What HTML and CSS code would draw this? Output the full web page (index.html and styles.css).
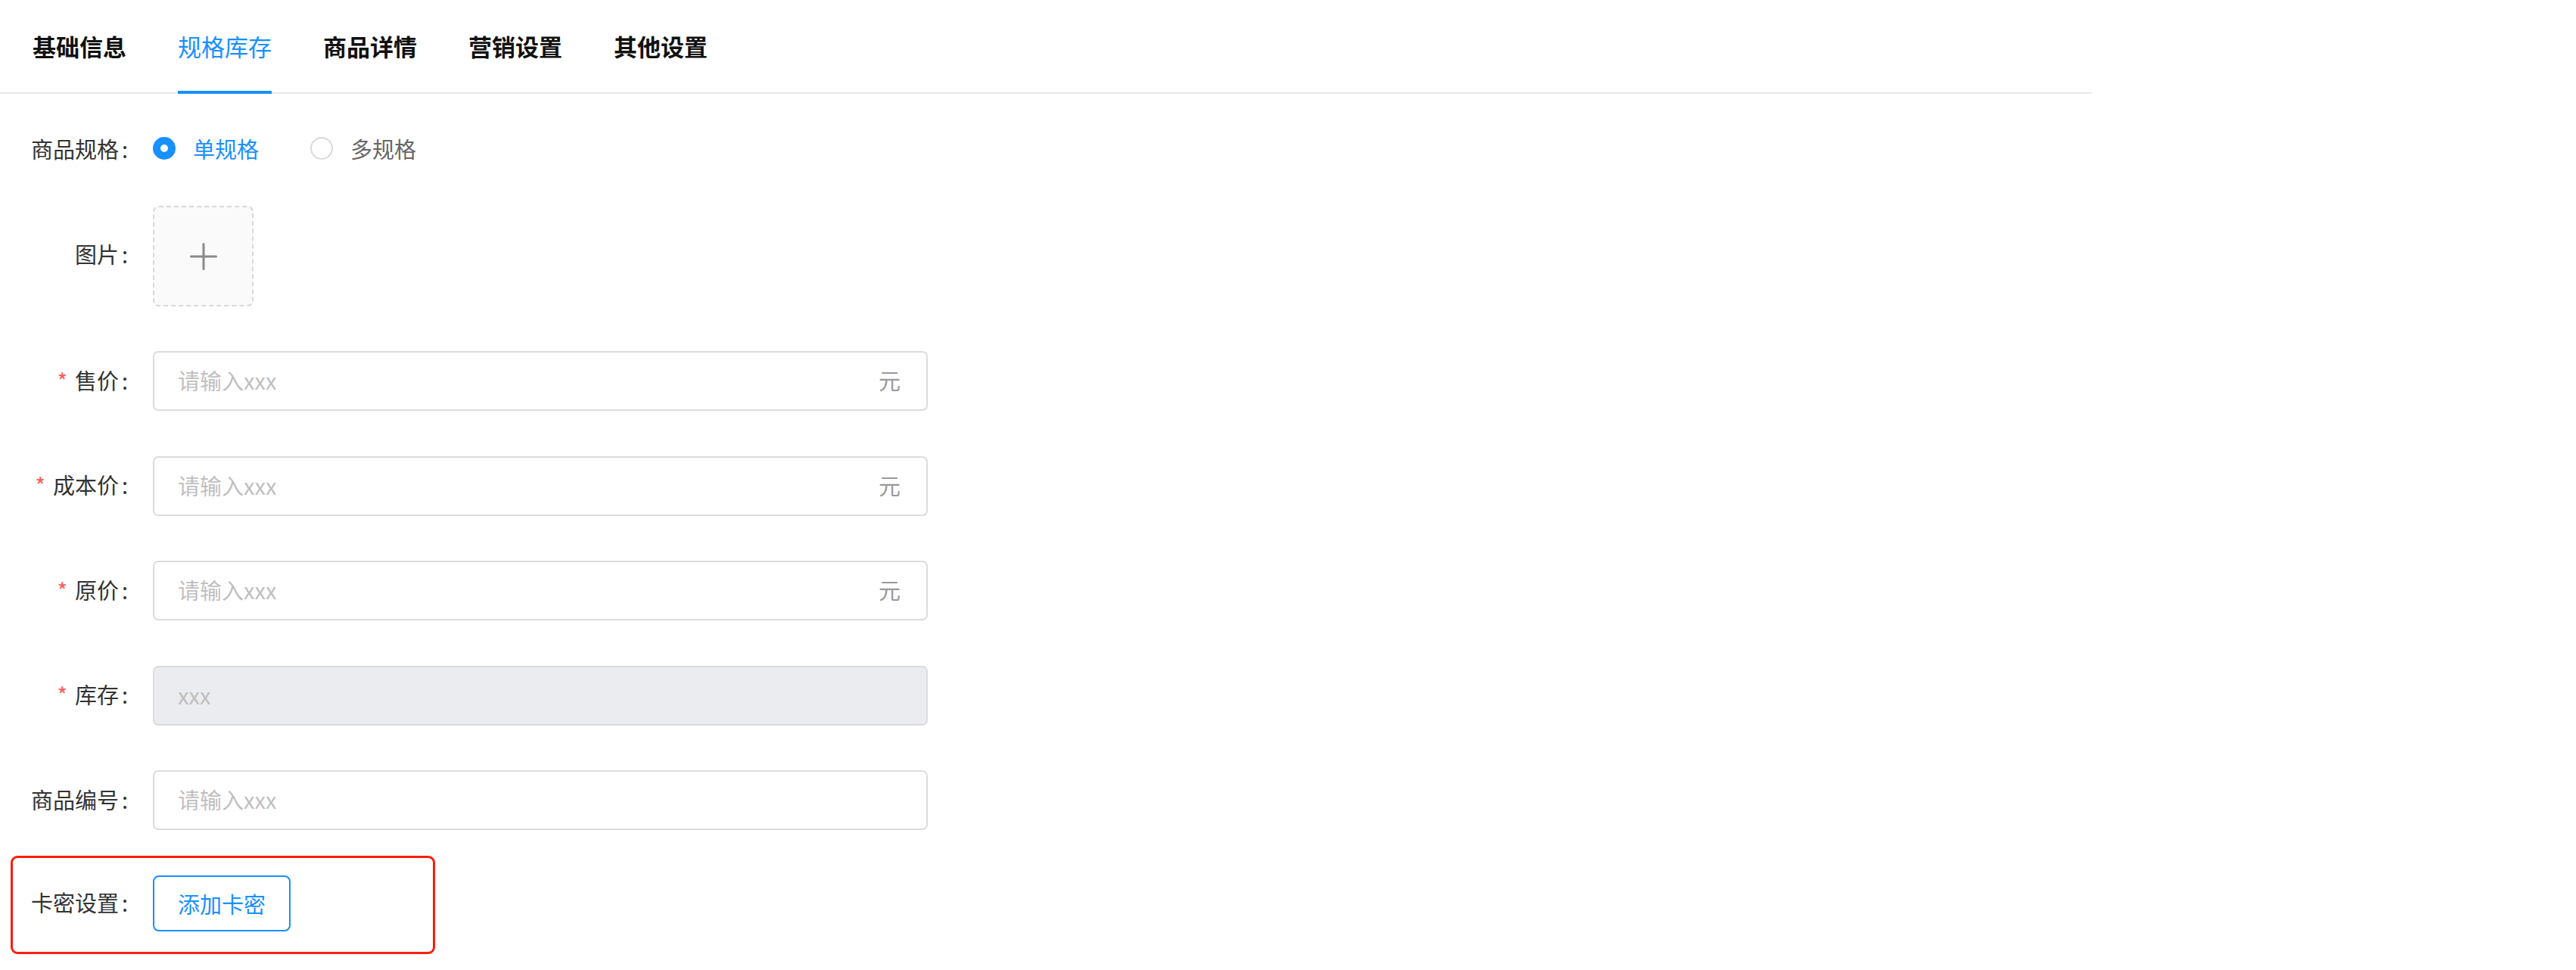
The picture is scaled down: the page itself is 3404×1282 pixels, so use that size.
FILE: index.html
```html
<!DOCTYPE html>
<html lang="zh-CN">
<head>
<meta charset="utf-8">
<title>规格库存</title>
<link rel="stylesheet" href="styles.css">
</head>
<body>
<div class="page">
  <nav class="tabs">
    <div class="tab">基础信息</div>
    <div class="tab active">规格库存</div>
    <div class="tab">商品详情</div>
    <div class="tab">营销设置</div>
    <div class="tab">其他设置</div>
  </nav>
  <form class="form">
    <div class="row row-radio">
      <label class="label">商品规格<span class="colon">:</span></label>
      <div class="radios">
        <span class="radio checked"><span class="dot"></span>单规格</span>
        <span class="radio"><span class="dot"></span>多规格</span>
      </div>
    </div>
    <div class="row row-upload">
      <label class="label label-upload">图片<span class="colon">:</span></label>
      <div class="upload">
        <svg width="36" height="36" viewBox="0 0 36 36"><path d="M18 1.5V34.5M1.5 18H34.5" stroke="#8a8a8a" stroke-width="3" stroke-linecap="round" fill="none"/></svg>
      </div>
    </div>
    <div class="row">
      <label class="label"><span class="req">*</span>售价<span class="colon">:</span></label>
      <div class="input"><span class="placeholder">请输入xxx</span><span class="suffix">元</span></div>
    </div>
    <div class="row">
      <label class="label"><span class="req">*</span>成本价<span class="colon">:</span></label>
      <div class="input"><span class="placeholder">请输入xxx</span><span class="suffix">元</span></div>
    </div>
    <div class="row">
      <label class="label"><span class="req">*</span>原价<span class="colon">:</span></label>
      <div class="input"><span class="placeholder">请输入xxx</span><span class="suffix">元</span></div>
    </div>
    <div class="row">
      <label class="label"><span class="req">*</span>库存<span class="colon">:</span></label>
      <div class="input disabled"><span class="placeholder">xxx</span></div>
    </div>
    <div class="row row-last">
      <label class="label">商品编号<span class="colon">:</span></label>
      <div class="input"><span class="placeholder">请输入xxx</span></div>
    </div>
    <div class="row row-card">
      <label class="label label-card">卡密设置<span class="colon">:</span></label>
      <button type="button" class="btn">添加卡密</button>
    </div>
  </form>
</div>
</body>
</html>
```
FILE: styles.css
```css
body {
  margin: 0;
  background: #ffffff;
  font-family: "Noto Sans CJK SC", "Noto Sans", sans-serif;
}

.page {
  width: 2764px;
}

.tabs {
  display: flex;
  gap: 68px;
  padding-left: 43px;
  height: 122px;
  border-bottom: 2px solid #e8e8e8;
}

.tab {
  box-sizing: border-box;
  height: 124px;
  padding-top: 45px;
  font-size: 31px;
  line-height: 32px;
  font-weight: 700;
  color: #111111;
  border-bottom: 4px solid transparent;
}

.tab.active {
  color: #1890ff;
  font-weight: 400;
  border-bottom-color: #1890ff;
}

.form {
  display: flex;
  flex-direction: column;
  padding-top: 34px;
}

.row {
  display: flex;
  align-items: center;
  margin-bottom: 59.5px;
}

.label {
  flex-shrink: 0;
  box-sizing: border-box;
  width: 202px;
  padding-right: 33px;
  padding-bottom: 4px;
  text-align: right;
  font-size: 29px;
  line-height: 40px;
  color: #333333;
}

.label-upload {
  padding-bottom: 8px;
}

.colon {
  margin-left: 4px;
}

.req {
  color: #ff5a5c;
  margin-right: 10px;
}

.row-radio {
  height: 79px;
  margin-bottom: 35px;
}

.row-upload {
  margin-bottom: 59px;
}

.radios {
  display: flex;
  gap: 68px;
  padding-bottom: 3px;
}

.radio {
  display: flex;
  align-items: center;
  gap: 23px;
  font-size: 29px;
  line-height: 40px;
  color: #666666;
}

.dot {
  box-sizing: border-box;
  width: 30px;
  height: 30px;
  border-radius: 50%;
  border: 2px solid #d9d9d9;
  background: #ffffff;
}

.radio.checked {
  color: #1890ff;
}

.radio.checked .dot {
  border: 10px solid #1890ff;
}

.upload {
  box-sizing: border-box;
  width: 133px;
  height: 133px;
  border: 2px dashed #d9d9d9;
  border-radius: 8px;
  background: #fafafa;
  display: flex;
  align-items: center;
  justify-content: center;
}

.input {
  box-sizing: border-box;
  width: 1024px;
  height: 79px;
  border: 2px solid #dcdcdc;
  border-radius: 7px;
  background: #ffffff;
  display: flex;
  align-items: center;
  justify-content: space-between;
  padding: 0 34px 3px 31px;
  font-size: 29px;
  line-height: 40px;
}

.input.disabled {
  background: #ebecef;
}

.placeholder {
  color: #bfbfbf;
}

.suffix {
  color: #999999;
}

.row-last {
  margin-bottom: 34px;
}

.row-card {
  box-sizing: border-box;
  margin: 0 0 0 14px;
  width: 561px;
  height: 130px;
  padding-bottom: 5px;
  border: 3px solid #fa1e0e;
  border-radius: 9px;
}

.label-card {
  width: 185px;
}

.btn {
  box-sizing: border-box;
  height: 74px;
  padding: 0 31px;
  border: 2px solid #1890ff;
  border-radius: 8px;
  background: #ffffff;
  color: #1890ff;
  font-family: "Noto Sans CJK SC", "Noto Sans", sans-serif;
  font-size: 29px;
  line-height: 40px;
}
```
